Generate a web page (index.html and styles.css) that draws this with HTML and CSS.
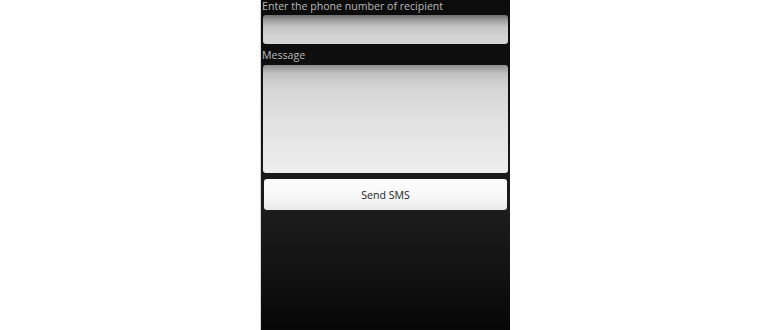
FILE: index.html
```html
<!DOCTYPE html>
<html lang="en">
<head>
    <meta charset="UTF-8">
    <title>Send SMS</title>

    <link rel="stylesheet" href="styles.css">
</head>
<body>

<div class="phone-screen">
    <label class="phone-screen_label" for="recipient">Enter the phone number of recipient</label>
    <input class="phone-screen_input" id="recipient" type="text">

    <label class="phone-screen_label" for="message">Message</label>
    <textarea class="phone-screen_textarea" id="message"></textarea>

    <button class="phone-screen_button">Send SMS</button>
</div>

</body>
</html>
```

FILE: styles.css
```css
body {
    margin: 0;
    background: #fff;
    font-family: "Open Sans", "DejaVu Sans", sans-serif;
}

.phone-screen {
    width: 250px;
    height: 330px;
    margin: 0 auto;
    display: flex;
    flex-direction: column;
    box-sizing: border-box;
    padding: 1px 2px 0 2px;
    border-left: 1px solid #d8d8d8;
    background: linear-gradient(to bottom, #0c0c0c 0%, #111 30%, #1d1d1d 62%, #141414 80%, #070707 100%);
}

.phone-screen_label {
    font-size: 10.6px;
    line-height: 11px;
    height: 11px;
    color: #bababa;
    margin-left: -1px;
}

.phone-screen_input + .phone-screen_label {
    margin-top: 6px;
}

.phone-screen_input,
.phone-screen_textarea {
    display: block;
    width: 245px;
    box-sizing: border-box;
    border: none;
    border-radius: 3px;
    margin: 3px 0 0 0;
    padding: 0;
    resize: none;
    outline: none;
}

.phone-screen_input {
    height: 29px;
    background: linear-gradient(to bottom, #6e6e6e 0%, #9e9e9e 18%, #c4c4c4 42%, #d2d2d2 70%, #d6d6d6 100%);
}

.phone-screen_textarea {
    height: 108px;
    margin-top: 4px;
    background: linear-gradient(to bottom, #8e8e8e 0%, #c2c2c2 8%, #d6d6d6 22%, #e2e2e2 55%, #eeeeee 100%);
}

.phone-screen_button {
    width: 243px;
    height: 31px;
    margin: 6px 0 0 1px;
    border: none;
    border-radius: 3px;
    background: linear-gradient(to bottom, #fdfdfd 0%, #f7f7f7 60%, #e9e9e9 100%);
    font-family: "Open Sans", "DejaVu Sans", sans-serif;
    font-size: 10.6px;
    color: #222;
    padding: 0;
}
```
